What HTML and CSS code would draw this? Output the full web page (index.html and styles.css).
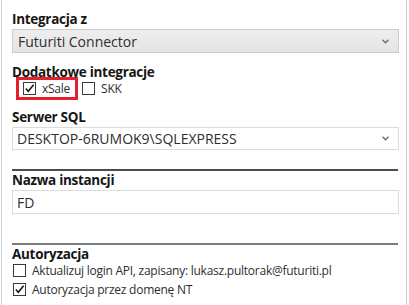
FILE: index.html
```html
<!DOCTYPE html>
<html lang="pl">

<head>
    <meta charset="UTF-8">
    <title>Ustawienia</title>
    <link rel="stylesheet" href="styles.css">
</head>

<body>
    <div class="frame">
        <div class="panel">

            <div class="label">Integracja z</div>
            <div class="select grey">
                <span>Futuriti Connector</span>
                <svg class="arrow" width="7" height="5" viewBox="0 0 7 5"><polyline points="0.5,0.8 3.5,3.8 6.5,0.8" /></svg>
            </div>

            <div class="label second">Dodatkowe integracje</div>
            <div class="checks">
                <label class="check marked">
                    <span class="box on"><svg width="11" height="11" viewBox="0 0 11 11"><polyline points="1.8,5.6 4.3,8.3 9.6,1.8" /></svg></span>xSale
                </label>
                <label class="check">
                    <span class="box"></span>SKK
                </label>
            </div>

            <div class="label third">Serwer SQL</div>
            <div class="select">
                <span>DESKTOP-6RUMOK9\SQLEXPRESS</span>
                <svg class="arrow" width="7" height="5" viewBox="0 0 7 5"><polyline points="0.5,0.8 3.5,3.8 6.5,0.8" /></svg>
            </div>

            <hr class="line dark">

            <div class="label">Nazwa instancji</div>
            <div class="input">FD</div>

            <hr class="line grey-line">

            <div class="label">Autoryzacja</div>
            <label class="check row first-row">
                <span class="box"></span>Aktualizuj login API, zapisany: lukasz.pultorak@futuriti.pl
            </label>
            <label class="check row">
                <span class="box on"><svg width="11" height="11" viewBox="0 0 11 11"><polyline points="1.8,5.6 4.3,8.3 9.6,1.8" /></svg></span>Autoryzacja przez domenę NT
            </label>

        </div>
    </div>
</body>

</html>
```

FILE: styles.css
```css
body {
    margin: 0;
    background: #fff;
    font-family: "Open Sans", "Noto Sans", sans-serif;
    color: #2e2e2e;
}

.frame {
    width: 404px;
    height: 305px;
    margin-left: 1px;
    border-left: 1px solid #d4d4d4;
    border-right: 1px solid #cdcdcd;
    overflow: hidden;
}

.panel {
    padding: 10px 7px 0 10px;
}

.label {
    font-weight: bold;
    font-size: 13.5px;
    letter-spacing: -0.3px;
    color: #161616;
    line-height: 19px;
    height: 19px;
}

.label.second {
    margin-top: 10px;
}

.label.third {
    margin-top: 8px;
}

.select,
.input {
    height: 24px;
    box-sizing: border-box;
    border: 1px solid #dcdcdc;
    display: flex;
    align-items: center;
    justify-content: space-between;
    padding: 0 9px 0 4px;
    font-size: 14px;
    color: #2e2e2e;
    background: #fff;
}

.select.grey {
    background: linear-gradient(#eeeeee, #e4e4e4);
    border-color: #cccccc;
    padding-left: 5px;
}

.select:not(.grey) {
    height: 23px;
}

.arrow polyline {
    fill: none;
    stroke: #6a6a6a;
    stroke-width: 1.3;
}

.checks {
    display: flex;
    align-items: center;
    gap: 4px;
    margin: -5px 0 0 4px;
}

.check {
    display: flex;
    align-items: center;
    gap: 6px;
    font-size: 12px;
    letter-spacing: -0.25px;
    color: #2e2e2e;
    height: 19px;
}

.check.marked {
    box-sizing: border-box;
    border: 3px solid #e3202b;
    height: 23px;
    padding: 0 5px 0 4px;
}

.box {
    width: 11px;
    height: 11px;
    border: 1px solid #3a3a3a;
    background: #fff;
    display: flex;
    flex-shrink: 0;
}

.box polyline {
    fill: none;
    stroke: #111;
    stroke-width: 1.5;
}

.line {
    border: none;
    margin: 0;
    height: 2px;
}

.line.dark {
    background: #4c4c4c;
    margin-top: 19px;
    margin-right: 1px;
}

.line.grey-line {
    background: #7c7c7c;
    margin-top: 29px;
    margin-right: 1px;
}

.row {
    margin-left: 1px;
}

.row.first-row {
    margin-top: -3px;
}
```
